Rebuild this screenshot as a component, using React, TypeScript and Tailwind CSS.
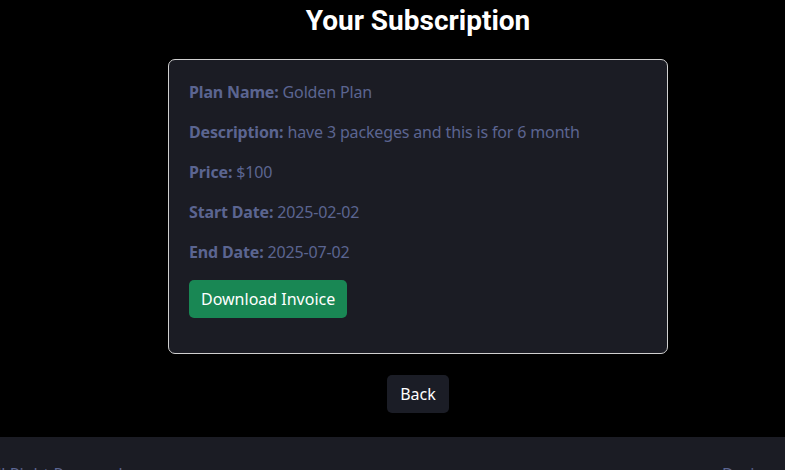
export default function App() {
  const rows: [string, string][] = [
    ['Plan Name:', 'Golden Plan'],
    ['Description:', 'have 3 packeges and this is for 6 month'],
    ['Price:', '$100'],
    ['Start Date:', '2025-02-02'],
    ['End Date:', '2025-07-02'],
  ];

  return (
    <div className="min-h-[470px] w-full overflow-hidden bg-black font-['Noto_Sans',sans-serif] text-[16px]">
      <main className="flex flex-col items-center pl-[51px]">
        <h2 className="mt-[4px] font-['Roboto',sans-serif] text-[28px] font-bold leading-[33px] text-white">Your Subscription</h2>
        <div className="mt-[22px] w-[500px] rounded-[7px] border border-[#d0d0d0] bg-[#1b1c24] px-[20px] pt-[20px] pb-[35px]">
          {rows.map(([k, v]) => (
            <p key={k} className="mb-[16px] leading-[24px] tracking-[-0.15px] text-[#5b6591]">
              <b className="font-bold">{k}</b> {v}
            </p>
          ))}
          <button className="h-[38px] rounded-[5px] bg-[#198754] px-[12px] leading-[24px] text-white">Download Invoice</button>
        </div>
        <button className="mt-[21px] h-[38px] rounded-[5px] bg-[#1b1d26] px-[13px] leading-[24px] text-white">Back</button>
      </main>
      <footer className="mt-[24px] h-[60px] overflow-hidden bg-[#1b1c24]">
        <div className="-ml-[13px] flex w-[900px] justify-between pt-[25px] leading-[24px] text-[#5b6591]">
          <span>All Right Reserved</span>
          <span className="w-[165px]">Designed by Team</span>
        </div>
      </footer>
    </div>
  );
}
